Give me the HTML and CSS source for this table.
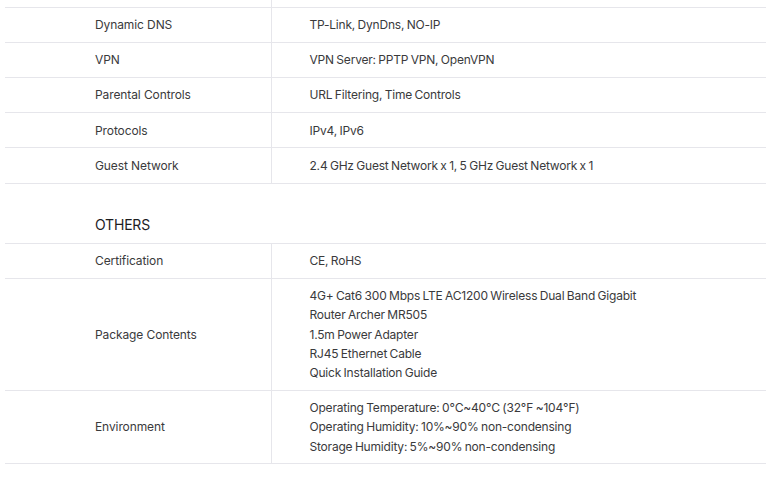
FILE: index.html
```html
<!DOCTYPE html>
<html>
<head>
<meta charset="utf-8">
<link rel="stylesheet" href="styles.css">
</head>
<body>
<div class="spec">
  <table class="spec-table">
    <tbody>
      <tr class="stub"><td class="label"></td><td class="value"></td></tr>
      <tr><td class="label">Dynamic DNS</td><td class="value">TP-Link, DynDns, NO-IP</td></tr>
      <tr><td class="label">VPN</td><td class="value">VPN Server: PPTP VPN, OpenVPN</td></tr>
      <tr><td class="label">Parental Controls</td><td class="value">URL Filtering, Time Controls</td></tr>
      <tr><td class="label">Protocols</td><td class="value">IPv4, IPv6</td></tr>
      <tr><td class="label">Guest Network</td><td class="value">2.4 GHz Guest Network x 1, 5 GHz Guest Network x 1</td></tr>
    </tbody>
  </table>
  <h3 class="section-title">OTHERS</h3>
  <table class="spec-table">
    <tbody>
      <tr><td class="label">Certification</td><td class="value">CE, RoHS</td></tr>
      <tr><td class="label">Package Contents</td><td class="value">4G+ Cat6 300 Mbps LTE AC1200 Wireless Dual Band Gigabit<br>Router Archer MR505<br>1.5m Power Adapter<br>RJ45 Ethernet Cable<br>Quick Installation Guide</td></tr>
      <tr><td class="label">Environment</td><td class="value">Operating Temperature: 0℃~40℃ (32℉ ~104℉)<br>Operating Humidity: 10%~90% non-condensing<br>Storage Humidity: 5%~90% non-condensing</td></tr>
    </tbody>
  </table>
</div>
</body>
</html>
```
FILE: styles.css
```css
html, body {
  margin: 0;
  padding: 0;
  background: #ffffff;
}
body {
  font-family: Inter, "Liberation Sans", Arial, sans-serif;
  font-size: 12px;
  color: #3a3a3c;
  overflow: hidden;
}
.spec {
  padding-left: 5px;
  width: 761px;
}
.spec-table {
  width: 100%;
  border-collapse: collapse;
  table-layout: fixed;
}
.spec-table td {
  border-bottom: 1px solid #e6e6eb;
  padding: 7.5px 0;
  line-height: 19.2px;
  vertical-align: middle;
}
.spec-table .label {
  width: 266px;
  padding-left: 90px;
  box-sizing: border-box;
  border-right: 1px solid #e6e6eb;
  letter-spacing: -0.1px;
}
.spec-table .value {
  padding-left: 38px;
  letter-spacing: -0.2px;
  word-spacing: -0.7px;
}
.spec-table .stub td {
  height: 7px;
  padding: 0;
  line-height: 0;
  box-sizing: border-box;
}
.section-title {
  margin: 0;
  padding: 31px 0 8px 90px;
  font-size: 14px;
  font-weight: 400;
  line-height: 20px;
  letter-spacing: -0.2px;
  color: #1d1d1f;
  border-bottom: 1px solid #e6e6eb;
}
```
